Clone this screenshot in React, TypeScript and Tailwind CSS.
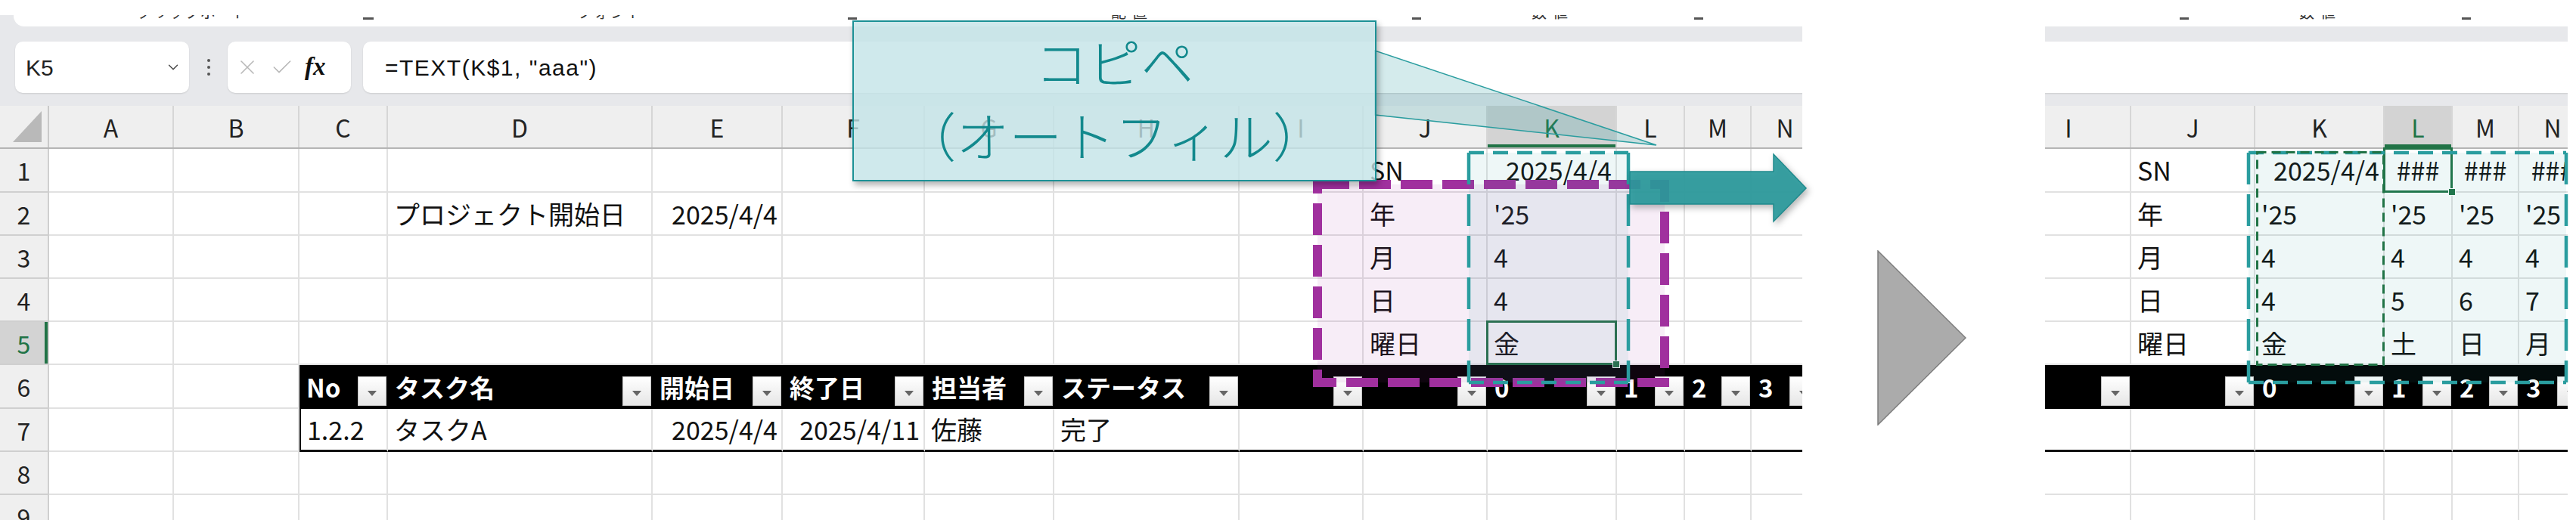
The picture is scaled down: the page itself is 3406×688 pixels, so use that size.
import { Check, ChevronDown, X } from "lucide-react";

type CellData = { v: string; align?: "left" | "right" | "center" };

const COLS = ["A", "B", "C", "D", "E", "F", "G", "H", "I", "J", "K", "L", "M", "N", "O"];
const GRID =
  "grid grid-cols-[65px_165px_166px_117px_350px_172px_188px_171px_245px_164px_164px_171px_90px_88px_90px_60px]";
const ROWS = [1, 2, 3, 4, 5, 6, 7, 8, 9];
const TABLE_COLS = ["C", "D", "E", "F", "G", "H", "I", "J", "K", "L", "M", "N", "O"];

const HEAD6: Record<string, string> = {
  C: "No",
  D: "タスク名",
  E: "開始日",
  F: "終了日",
  G: "担当者",
  H: "ステータス",
  I: "",
  J: "",
  K: "0",
  L: "1",
  M: "2",
  N: "3",
  O: "4",
};

const BASE: Record<string, CellData> = {
  D2: { v: "プロジェクト開始日" },
  E2: { v: "2025/4/4", align: "right" },
  J1: { v: "SN" },
  J2: { v: "年" },
  J3: { v: "月" },
  J4: { v: "日" },
  J5: { v: "曜日" },
  K1: { v: "2025/4/4", align: "right" },
  K2: { v: "'25" },
  K3: { v: "4" },
  K4: { v: "4" },
  K5: { v: "金" },
  C7: { v: "1.2.2" },
  D7: { v: "タスクA" },
  E7: { v: "2025/4/4", align: "right" },
  F7: { v: "2025/4/11", align: "right" },
  G7: { v: "佐藤" },
  H7: { v: "完了" },
};

// after the autofill
const FILLED: Record<string, CellData> = {
  ...BASE,
  L1: { v: "###", align: "center" },
  M1: { v: "###", align: "center" },
  N1: { v: "###", align: "center" },
  L2: { v: "'25" },
  M2: { v: "'25" },
  N2: { v: "'25" },
  L3: { v: "4" },
  M3: { v: "4" },
  N3: { v: "4" },
  L4: { v: "5" },
  M4: { v: "6" },
  N4: { v: "7" },
  L5: { v: "土" },
  M5: { v: "日" },
  N5: { v: "月" },
};

function Ribbon() {
  return (
    <div>
      <div className="h-[20px] bg-white" />
      <div className="h-[15px] flex bg-[#e7e8eb]">
        <div className="w-[18px]" />
        <div className="flex-1 bg-white rounded-bl-[14px] overflow-hidden">
          <div className="flex pl-[163px] -mt-[14px] text-[20px] leading-[20px] text-[#333]">
            <div className="w-[299px] tracking-[1px]">クリップボード</div>
            <div className="w-[283px] pt-[17px]">
              <div className="w-[14px] h-[3px] bg-[#555]" />
            </div>
            <div className="w-[358px] tracking-[2px]">フォント</div>
            <div className="w-[348px] pt-[17px]">
              <div className="w-[12px] h-[3px] bg-[#555]" />
            </div>
            <div className="w-[398px] tracking-[8px]">配置</div>
            <div className="w-[158px] pt-[17px]">
              <div className="w-[12px] h-[3px] bg-[#555]" />
            </div>
            <div className="w-[215px] tracking-[8px]">数値</div>
            <div className="w-[100px] pt-[17px]">
              <div className="w-[12px] h-[3px] bg-[#555]" />
            </div>
          </div>
        </div>
      </div>
    </div>
  );
}

function FormulaBar() {
  return (
    <div className="h-[105px] bg-[#e7e8eb] flex items-start pt-[20px] pl-[20px] pr-[10px]">
      <div className="w-[230px] h-[68px] shrink-0 bg-white rounded-[10px] shadow-[0_1px_2px_rgba(0,0,0,0.12)] flex items-center justify-between pl-[14px] pr-[10px]">
        <span className="font-['Liberation_Sans',sans-serif] text-[30px] text-[#222]">K5</span>
        <ChevronDown size={22} strokeWidth={1.5} color="#444" />
      </div>
      <div className="w-[51px] h-[68px] shrink-0 flex flex-col items-center justify-center gap-[5px]">
        <div className="w-[4px] h-[4px] rounded-full bg-[#555]" />
        <div className="w-[4px] h-[4px] rounded-full bg-[#555]" />
        <div className="w-[4px] h-[4px] rounded-full bg-[#555]" />
      </div>
      <div className="w-[163px] h-[68px] shrink-0 bg-white rounded-[10px] shadow-[0_1px_2px_rgba(0,0,0,0.12)] flex items-center pl-[10px] gap-[14px]">
        <X size={32} strokeWidth={1.2} color="#b8b8b8" />
        <Check size={32} strokeWidth={1.2} color="#b8b8b8" />
        <span className="font-['Liberation_Serif',serif] italic font-bold text-[33px] text-[#111]">fx</span>
      </div>
      <div className="ml-[16px] flex-1 h-[68px] bg-white rounded-[10px] shadow-[0_1px_2px_rgba(0,0,0,0.12)] flex items-center pl-[29px] font-['Liberation_Sans',sans-serif] text-[30px] tracking-[1.5px] text-[#111]">
        =TEXT(K$1, "aaa")
      </div>
    </div>
  );
}

function FilterButton() {
  return (
    <div className="self-end mb-[4px] mr-[2px] w-[38px] h-[39px] shrink-0 bg-linear-to-b from-white to-[#e6e6e6] border border-[#c4c4c4] flex items-center justify-center pt-[6px]">
      <svg width="12" height="7" viewBox="0 0 12 7">
        <path d="M0 0h12L6 7z" fill="#666" />
      </svg>
    </div>
  );
}

function Sheet({ data, active }: { data: Record<string, CellData>; active: string }) {
  const activeCol = active[0];
  const activeRow = Number(active.slice(1));

  return (
    <div className="w-[2466px] shrink-0">
      <Ribbon />
      <FormulaBar />

      {/* column letters */}
      <div className={`${GRID} h-[57px] bg-[#efefef] border-b-2 border-[#b5b5b5]`}>
        <div className="flex items-end justify-end pr-[8px] pb-[7px] border-r-2 border-[#c9c9c9]">
          <svg width="38" height="41" viewBox="0 0 38 41">
            <polygon points="38,0 38,41 0,41" fill="#b9b9b9" />
          </svg>
        </div>
        {COLS.map((c) => (
          <div
            key={c}
            className={`flex items-center justify-center border-r-2 border-[#d6d6d6] text-[32px] leading-none ${
              c === activeCol
                ? "bg-[#d3d3d3] text-[#217346] shadow-[inset_0_-4px_0_#217346]"
                : "text-[#222]"
            }`}
          >
            {c}
          </div>
        ))}
      </div>

      {ROWS.map((r) => (
        <div key={r} className={`${GRID} ${r === 1 || r === 6 ? "h-[58px]" : "h-[57px]"}`}>
          <div
            className={`flex items-center justify-center border-r-2 border-b-2 border-[#cfcfcf] text-[32px] leading-none ${
              r === activeRow
                ? "bg-[#d3d3d3] text-[#217346] shadow-[inset_-4px_0_0_#217346]"
                : "bg-[#efefef] text-[#222]"
            }`}
          >
            {r}
          </div>
          {COLS.map((c) => {
            const id = `${c}${r}`;
            if (r === 6 && TABLE_COLS.includes(c)) {
              return (
                <div key={id} className="flex items-center justify-between bg-black text-white font-bold text-[33px] leading-none pl-[9px] whitespace-nowrap">
                  <span>{HEAD6[c]}</span>
                  <FilterButton />
                </div>
              );
            }
            const cell = data[id];
            const isActive = id === active;
            const inTable = r === 7 && TABLE_COLS.includes(c);
            return (
              <div
                key={id}
                className={`relative flex items-center border-r-2 border-b-2 border-[#e1e1e1] text-[34px] leading-none whitespace-nowrap text-[#111] ${
                  cell?.align === "right"
                    ? "justify-end pr-[5px]"
                    : cell?.align === "center"
                    ? "justify-center"
                    : "pl-[8px]"
                } ${inTable ? "border-b-[3px] border-b-[#111]" : ""} ${
                  id === "C7" ? "border-l-2 border-l-[#111]" : ""
                } ${isActive ? "z-[5]" : ""}`}
              >
                {cell?.v}
                {isActive && (
                  <>
                    <div className="absolute -top-[2px] -left-[2px] -right-[2px] -bottom-[2px] border-[3px] border-[#217346]" />
                    <div className="absolute -right-[6px] -bottom-[6px] w-[10px] h-[10px] bg-[#217346] border-[1.5px] border-white" />
                  </>
                )}
              </div>
            );
          })}
        </div>
      ))}
    </div>
  );
}

function DashBox({ x1, y1, x2, y2 }: { x1: number; y1: number; x2: number; y2: number }) {
  return (
    <g>
      <rect x={x1} y={y1} width={x2 - x1} height={y2 - y1} fill="#2a9d9f" fillOpacity="0.08" />
      <g stroke="#2a9d9f" strokeWidth="4.5" fill="none">
        <line x1={x1} y1={y1} x2={x2} y2={y1} strokeDasharray="20 12" />
        <line x1={x1} y1={y2} x2={x2} y2={y2} strokeDasharray="20 12" />
        <line x1={x1} y1={y1} x2={x1} y2={y2} strokeDasharray="42 13" />
        <line x1={x2} y1={y1} x2={x2} y2={y2} strokeDasharray="42 13" />
      </g>
    </g>
  );
}

export default function App() {
  return (
    <div className="relative w-[3406px] h-[688px] overflow-hidden bg-white flex font-['Noto_Sans_CJK_JP',sans-serif]">
      {/* before: left sheet */}
      <div className="w-[2383px] h-[688px] shrink-0 overflow-hidden">
        <Sheet data={BASE} active="K5" />
      </div>

      {/* gray chevron between the two shots */}
      <div className="w-[321px] shrink-0 pl-[99px] pt-[331px]">
        <svg width="118" height="232" viewBox="0 0 118 232">
          <polygon points="1,1 117,116 1,231" fill="#ababab" stroke="#7d7d7d" strokeWidth="1.5" />
        </svg>
      </div>

      {/* after: same sheet scrolled to column I */}
      <div className="w-[691px] h-[688px] shrink-0 overflow-hidden">
        <div className="-ml-[1689px]">
          <Sheet data={FILLED} active="L1" />
        </div>
      </div>

      {/* annotations */}
      <svg className="absolute inset-0 z-20 pointer-events-none" width="3406" height="688" viewBox="0 0 3406 688">
        <rect
          x="1742"
          y="244"
          width="459"
          height="262"
          fill="#a0309e"
          fillOpacity="0.085"
          stroke="#a0309e"
          strokeWidth="12"
          strokeDasharray="42 13"
        />
        <DashBox x1={1942} y1={202} x2={2153} y2={506} />
        <DashBox x1={2973} y1={202} x2={3393} y2={506} />
        <rect
          x="2984.5"
          y="201.5"
          width="167"
          height="281"
          fill="none"
          stroke="#217346"
          strokeWidth="3"
          strokeDasharray="12 7"
        />
        <polygon
          points="1818,67 1818,152 2190,192"
          fill="#2a9d9f"
          fillOpacity="0.2"
          stroke="#2a9d9f"
          strokeWidth="1.5"
        />
        <polygon
          className="drop-shadow-[3px_4px_4px_rgba(0,0,0,0.3)]"
          points="2155,227 2345,227 2345,204 2388,249 2345,293 2345,270 2155,270"
          fill="#2a9a9c"
          fillOpacity="0.92"
          stroke="#1f8a8d"
          strokeWidth="1.5"
        />
      </svg>

      <div className="absolute left-[1127px] top-[27px] z-30 w-[693px] h-[213px] bg-[#c3e4e7]/80 border-2 border-[#1c9196] shadow-[3px_5px_8px_rgba(0,0,0,0.3)] flex flex-col items-center justify-center pb-[10px] text-[70px] leading-[97px] font-light text-[#12898d]">
        <span>コピペ</span>
        <span>（オートフィル）</span>
      </div>
    </div>
  );
}
